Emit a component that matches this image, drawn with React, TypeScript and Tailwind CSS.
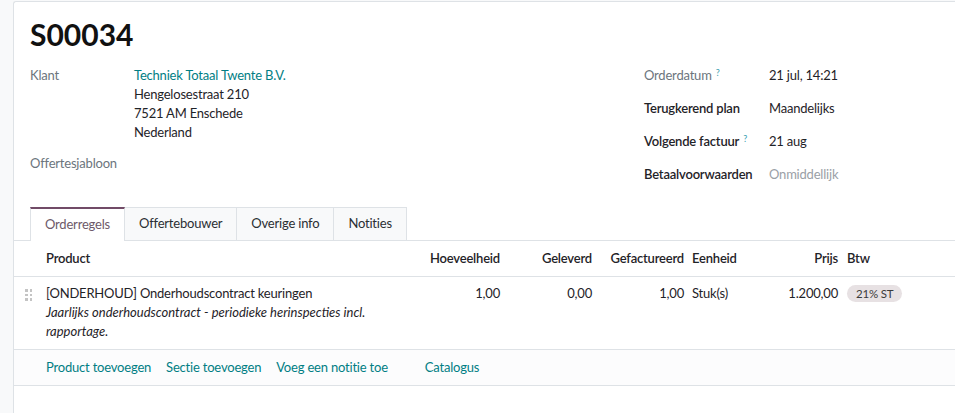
import React from "react";

type Line = {
  product: string;
  note: string[];
  qty: string;
  delivered: string;
  invoiced: string;
  uom: string;
  price: string;
  tax: string;
};

const LINES: Line[] = [
  {
    product: "[ONDERHOUD] Onderhoudscontract keuringen",
    note: [
      "Jaarlijks onderhoudscontract - periodieke herinspecties incl.",
      "rapportage.",
    ],
    qty: "1,00",
    delivered: "0,00",
    invoiced: "1,00",
    uom: "Stuk(s)",
    price: "1.200,00",
    tax: "21% ST",
  },
];

const TABS = ["Orderregels", "Offertebouwer", "Overige info", "Notities"];

const COLS = "grid grid-cols-[32px_366px_88px_92px_92px_77px_77px_1fr]";

function Help() {
  return <sup className="ml-1 text-[9px] font-normal text-[#3aa0b0]">?</sup>;
}

function DragHandle() {
  return (
    <div className="grid grid-cols-2 gap-[2px] w-[7px] h-fit">
      {[0, 1, 2, 3, 4, 5].map((i) => (
        <span key={i} className="block w-[2.5px] h-[2.5px] bg-[#c4c4c4]" />
      ))}
    </div>
  );
}

export default function App() {
  return (
    <div className="min-h-[413px] bg-[#f8f9fa] pl-[13px] pt-[1px] overflow-hidden font-['Lato',sans-serif] text-[13px] tracking-[-0.2px] text-[#1f2328]">
      <div className="w-[960px] min-h-[412px] bg-white border-l border-t border-[#dee2e6] rounded-tl-[3px]">
        {/* header */}
        <div className="px-4 pt-[10px]">
          <h1 className="text-[30px] leading-[44px] font-bold tracking-normal text-[#111]">S00034</h1>

          <div className="flex mt-[10px]">
            <div className="w-[614px]">
              <div className="flex leading-[19px]">
                <div className="w-[104px] text-[#6c757d]">Klant</div>
                <div>
                  <div className="text-[#017e84]">Techniek Totaal Twente B.V.</div>
                  <div>Hengelosestraat 210</div>
                  <div>7521 AM Enschede</div>
                  <div>Nederland</div>
                </div>
              </div>
              <div className="mt-[12px] leading-[19px] text-[#6c757d]">Offertesjabloon</div>
            </div>

            <div className="flex flex-col gap-[14px] leading-[19px]">
              <div className="flex">
                <div className="w-[125px] text-[#6c757d]">
                  Orderdatum<Help />
                </div>
                <div>21 jul, 14:21</div>
              </div>
              <div className="flex">
                <div className="w-[125px] font-semibold">Terugkerend plan</div>
                <div>Maandelijks</div>
              </div>
              <div className="flex">
                <div className="w-[125px] font-semibold">
                  Volgende factuur<Help />
                </div>
                <div>21 aug</div>
              </div>
              <div className="flex">
                <div className="w-[125px] font-semibold">Betaalvoorwaarden</div>
                <div className="text-[#9aa0a6]">Onmiddellijk</div>
              </div>
            </div>
          </div>
        </div>

        {/* tabs */}
        <div className="mt-[23px] flex pl-4 border-b border-[#dee2e6]">
          {TABS.map((t, i) => (
            <div
              key={t}
              className={
                i === 0
                  ? "-mb-px h-[34px] px-[14px] flex items-center bg-white border-x border-[#dee2e6] border-t-2 border-t-[#714b67] text-[#6d5a69]"
                  : "h-[33px] px-[14px] flex items-center bg-[#f8f9fa] border-t border-r border-[#dee2e6] text-[#2b2f33]"
              }
            >
              {t}
            </div>
          ))}
        </div>

        {/* order lines */}
        <div className={`${COLS} h-[36px] items-center font-semibold border-b border-[#dee2e6]`}>
          <div />
          <div>Product</div>
          <div className="text-right">Hoeveelheid</div>
          <div className="text-right">Geleverd</div>
          <div className="text-right">Gefactureerd</div>
          <div className="pl-2">Eenheid</div>
          <div className="text-right">Prijs</div>
          <div className="pl-[9px]">Btw</div>
        </div>

        {LINES.map((l) => (
          <div key={l.product} className={`${COLS} pt-[7px] pb-[8px] leading-[19px] border-b border-[#dee2e6]`}>
            <div className="flex justify-center items-start pt-[5px] pr-[3px]">
              <DragHandle />
            </div>
            <div>
              <div>{l.product}</div>
              {l.note.map((n) => (
                <div key={n} className="italic tracking-normal">
                  {n}
                </div>
              ))}
            </div>
            <div className="text-right">{l.qty}</div>
            <div className="text-right">{l.delivered}</div>
            <div className="text-right">{l.invoiced}</div>
            <div className="pl-2">{l.uom}</div>
            <div className="text-right">{l.price}</div>
            <div className="pl-[9px]">
              <span className="inline-block px-[9px] rounded-full bg-[#e7e1e3] text-[11.5px] leading-[17px] text-[#3b3b3b]">
                {l.tax}
              </span>
            </div>
          </div>
        ))}

        {/* add line actions */}
        <div className="h-[36px] flex items-center pl-[32px] bg-[#fcfcfd] border-b border-[#dee2e6] text-[#017e84]">
          <div className="flex gap-[15px]">
            <span>Product toevoegen</span>
            <span>Sectie toevoegen</span>
            <span>Voeg een notitie toe</span>
          </div>
          <span className="ml-[37px]">Catalogus</span>
        </div>
      </div>
    </div>
  );
}
